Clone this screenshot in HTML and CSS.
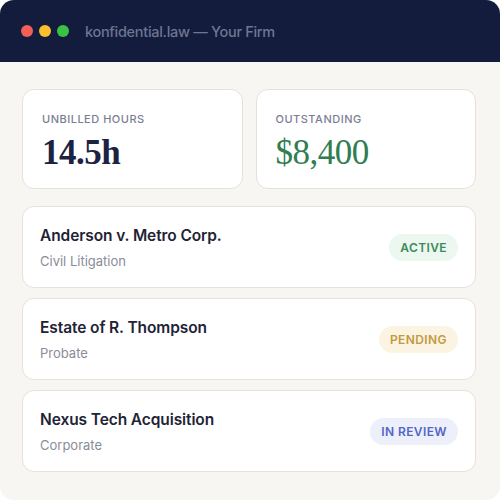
FILE: index.html
```html
<!DOCTYPE html>
<html>
<head>
<meta charset="utf-8">
<link rel="stylesheet" href="styles.css">
</head>
<body>
<div class="window">
  <div class="titlebar">
    <div class="dots">
      <span class="dot red"></span>
      <span class="dot yellow"></span>
      <span class="dot green"></span>
    </div>
    <div class="title">konfidential.law — Your Firm</div>
  </div>
  <div class="content">
    <div class="stats">
      <div class="card stat">
        <div class="label">UNBILLED HOURS</div>
        <div class="value">14.5h</div>
      </div>
      <div class="card stat">
        <div class="label">OUTSTANDING</div>
        <div class="value money">$8,400</div>
      </div>
    </div>
    <div class="list">
      <div class="card item">
        <div class="info">
          <div class="name">Anderson v. Metro Corp.</div>
          <div class="type">Civil Litigation</div>
        </div>
        <span class="badge active">ACTIVE</span>
      </div>
      <div class="card item">
        <div class="info">
          <div class="name">Estate of R. Thompson</div>
          <div class="type">Probate</div>
        </div>
        <span class="badge pending">PENDING</span>
      </div>
      <div class="card item">
        <div class="info">
          <div class="name">Nexus Tech Acquisition</div>
          <div class="type">Corporate</div>
        </div>
        <span class="badge review">IN REVIEW</span>
      </div>
    </div>
  </div>
</div>
</body>
</html>
```

FILE: styles.css
```css
html, body {
  margin: 0;
  padding: 0;
  background: #ffffff;
}
body {
  font-family: Inter, "Noto Sans", sans-serif;
}
.window {
  width: 500px;
  height: 500px;
  border-radius: 14px;
  overflow: hidden;
  background: #f8f6f2;
  box-sizing: border-box;
}
.titlebar {
  height: 62px;
  background: #141c3d;
  display: flex;
  align-items: center;
  padding-left: 21px;
  box-sizing: border-box;
}
.dots {
  display: flex;
  gap: 6px;
}
.dot {
  width: 12px;
  height: 12px;
  border-radius: 50%;
  display: block;
}
.red { background: #f25f58; }
.yellow { background: #fbbe2e; }
.green { background: #3ac244; }
.title {
  margin-left: 16px;
  color: #6d7592;
  font-size: 14.5px;
  font-weight: 500;
  letter-spacing: -0.3px;
}
.content {
  padding: 27px 24px 0 22px;
}
.card {
  background: #ffffff;
  border: 1px solid #e6e2da;
  border-radius: 12px;
  box-sizing: border-box;
}
.stats {
  display: flex;
  gap: 13px;
}
.stat {
  flex: 1;
  height: 100px;
  padding: 22px 19px 0 19px;
}
.label {
  font-size: 11px;
  font-weight: 500;
  letter-spacing: 0.5px;
  color: #7b7e93;
}
.value {
  margin-top: 7px;
  font-family: "Liberation Serif", "DejaVu Serif", serif;
  font-size: 35px;
  line-height: 40px;
  font-weight: 700;
  color: #1b2242;
  letter-spacing: -0.5px;
}
.value.money {
  color: #2f7d50;
  font-weight: 400;
}
.list {
  margin-top: 17px;
  display: flex;
  flex-direction: column;
  gap: 10px;
}
.item {
  height: 82px;
  display: flex;
  align-items: center;
  justify-content: space-between;
  padding: 0 17px 0 17px;
}
.name {
  font-size: 15.5px;
  font-weight: 600;
  color: #1f2336;
  letter-spacing: -0.1px;
}
.type {
  margin-top: 8px;
  font-size: 13px;
  color: #8a8c99;
}
.badge {
  height: 27px;
  line-height: 27px;
  padding: 0 11px;
  border-radius: 14px;
  font-size: 12px;
  font-weight: 600;
  letter-spacing: 0.4px;
}
.active { background: #ebf7ef; color: #3d8a5c; }
.pending { background: #fcf4e2; color: #c29a3f; }
.review { background: #edf0fb; color: #5365c6; }
```
